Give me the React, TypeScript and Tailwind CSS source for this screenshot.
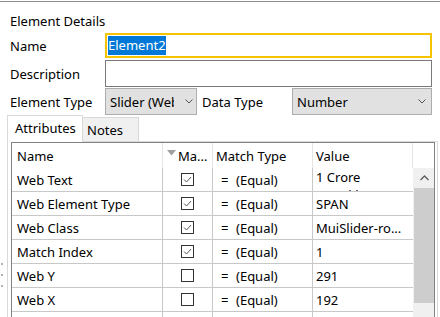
import React from "react";

type Row = { name: string; match: boolean; value: string };

const rows: Row[] = [
  { name: "Web Text", match: true, value: "1 Crore\n75 Lakh" },
  { name: "Web Element Type", match: true, value: "SPAN" },
  { name: "Web Class", match: true, value: "MuiSlider-ro..." },
  { name: "Match Index", match: true, value: "1" },
  { name: "Web Y", match: false, value: "291" },
  { name: "Web X", match: false, value: "192" },
  { name: "", match: false, value: "" },
];

function Chevron() {
  return (
    <svg width="8" height="5" viewBox="0 0 8 5" className="shrink-0">
      <path d="M0.5 0.5 L4 4 L7.5 0.5" fill="none" stroke="#555" strokeWidth="1" />
    </svg>
  );
}

function CheckBox({ checked }: { checked: boolean }) {
  return (
    <div className="w-[13px] h-[13px] border border-[#333] bg-white flex items-center justify-center">
      {checked && (
        <svg width="11" height="11" viewBox="0 0 11 11">
          <path d="M2 5.5 L4.5 8 L9 3" fill="none" stroke="#555" strokeWidth="1" />
        </svg>
      )}
    </div>
  );
}

export default function App() {
  return (
    <div className="w-[440px] h-[317px] overflow-hidden bg-white font-['Noto_Sans',sans-serif] text-[13px] leading-[16px] text-black">
      {/* top rule */}
      <div className="mt-px h-px bg-[#8c8c8c]" />

      <div className="h-[31px] pl-[10px] pt-[11px]">Element Details</div>

      {/* Name */}
      <div className="flex h-[25px] items-center">
        <div className="w-[105px] pl-[10px]">Name</div>
        <div className="w-[327px] h-[25px] border-2 border-[#f5c400] flex items-center px-px">
          <span className="bg-[#0078d7] text-white leading-[19px]">Element2</span>
        </div>
      </div>

      {/* Description */}
      <div className="flex h-[27px] items-center mt-[2px]">
        <div className="w-[105px] pl-[10px]">Description</div>
        <div className="w-[327px] h-[27px] border border-[#7a7a7a]" />
      </div>

      {/* Element / data type */}
      <div className="flex h-[27px] items-center mt-px">
        <div className="w-[105px] pl-[10px] whitespace-nowrap">Element Type</div>
        <div className="w-[92px] h-[27px] border border-[#adadad] bg-[#e1e1e1] flex items-center pl-[4px]">
          <span className="w-[64px] overflow-hidden whitespace-nowrap">Slider (Web Element)</span>
          <div className="ml-[11px]">
            <Chevron />
          </div>
        </div>
        <div className="w-[95px] pl-[5px]">Data Type</div>
        <div className="w-[140px] h-[27px] border border-[#adadad] bg-[#e1e1e1] flex items-center pl-[4px]">
          <span className="flex-1">Number</span>
          <div className="mr-[5px]">
            <Chevron />
          </div>
        </div>
      </div>

      {/* Tabs */}
      <div className="flex items-end h-[26px] pl-[7px]">
        <div className="relative z-10 -mb-px w-[76px] h-[27px] border-t border-l border-r border-[#d9d9d9] bg-white pl-[7px] pt-[4px]">
          Attributes
        </div>
        <div className="w-[56px] h-[24px] border-t border-r border-[#d9d9d9] bg-[#f0f0f0] pl-[4px] pt-[4px]">
          Notes
        </div>
      </div>

      <div className="flex">
        {/* splitter grip */}
        <div className="w-[7px] flex flex-col items-start pt-[122px] gap-[9px]">
          <div className="ml-px w-[2px] h-[2px] bg-[#b0b0b0]" />
          <div className="ml-px w-[2px] h-[2px] bg-[#b0b0b0]" />
          <div className="ml-px w-[2px] h-[2px] bg-[#b0b0b0]" />
        </div>

        {/* Tab panel */}
        <div className="w-[431px] h-[200px] border-l border-r border-t border-[#d9d9d9] pl-[3px] pr-[2px]">
          <div className="w-[424px] border border-[#828282]">
            {/* header */}
            <div className="flex h-[25px] items-center">
              <div className="w-[151px] h-full pl-[5px] flex items-center border-r border-[#e5e5e5]">Name</div>
              <div className="w-[50px] h-full pl-[4px] flex items-center border-r border-[#e5e5e5] overflow-hidden whitespace-nowrap">
                <svg width="9" height="6" viewBox="0 0 9 6" className="self-start mt-[7px] shrink-0">
                  <path d="M0 0 L9 0 L4.5 5.5 Z" fill="#a0a0a0" />
                </svg>
                <span className="ml-[2px]">Ma...</span>
              </div>
              <div className="w-[100px] h-full pl-[3px] flex items-center border-r border-[#e5e5e5]">Match Type</div>
              <div className="w-[100px] h-full pl-[3px] flex items-center border-r border-[#e5e5e5]">Value</div>
              <div className="w-[21px] h-full" />
            </div>

            {/* body */}
            <div className="flex">
              <div className="w-[401px]">
                {rows.map((r, i) => (
                  <div key={i} className="flex h-[24px] border-b border-[#c8c8c8]">
                    <div className="w-[151px] pl-[5px] flex items-center border-r border-[#c8c8c8] whitespace-nowrap">{r.name}</div>
                    <div className="w-[50px] flex items-center justify-center border-r border-[#c8c8c8]">
                      {r.name && <CheckBox checked={r.match} />}
                    </div>
                    <div className="w-[100px] pl-[8px] flex items-center border-r border-[#c8c8c8]">
                      {r.name && (
                        <>
                          <span className="w-[15px]">=</span>
                          <span>(Equal)</span>
                        </>
                      )}
                    </div>
                    <div
                      className={
                        r.value.includes("\n")
                          ? "w-[100px] pl-[3px] leading-[18px] overflow-hidden whitespace-pre-line"
                          : "w-[100px] pl-[3px] flex items-center whitespace-nowrap"
                      }
                    >
                      {r.value}
                    </div>
                  </div>
                ))}
              </div>

              {/* scrollbar */}
              <div className="w-[21px] flex flex-col bg-[#f0f0f0] pl-px">
                <div className="h-[20px] flex items-center justify-center">
                  <svg width="9" height="6" viewBox="0 0 9 6">
                    <path d="M0.5 5 L4.5 1 L8.5 5" fill="none" stroke="#606060" strokeWidth="1.4" />
                  </svg>
                </div>
                <div className="h-[115px] bg-[#cdcdcd]" />
              </div>
            </div>
          </div>
        </div>
      </div>
    </div>
  );
}
